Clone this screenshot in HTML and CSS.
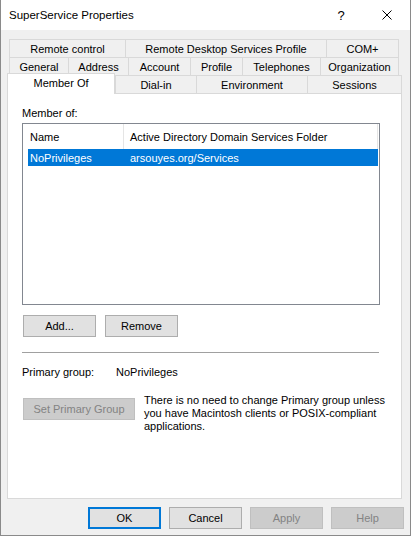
FILE: index.html
```html
<!DOCTYPE html>
<html lang="en">
<head>
    <meta charset="UTF-8">
    <title>SuperService Properties</title>
    <link rel="stylesheet" href="styles.css">
</head>
<body>
    <div class="window">
        <div class="titlebar">
            <span class="title">SuperService Properties</span>
            <span class="caption-btn help-btn">?</span>
            <span class="caption-btn close-btn">
                <svg width="10" height="10" viewBox="0 0 10 10"><path d="M0.5 0.5L9.5 9.5M9.5 0.5L0.5 9.5" stroke="#000" stroke-width="1" fill="none"/></svg>
            </span>
        </div>

        <div class="dialog">
            <div class="tabs">
                <div class="tab-row row-1">
                    <div class="tab">Remote control</div>
                    <div class="tab">Remote Desktop Services Profile</div>
                    <div class="tab last">COM+</div>
                </div>
                <div class="tab-row row-2">
                    <div class="tab">General</div>
                    <div class="tab">Address</div>
                    <div class="tab">Account</div>
                    <div class="tab">Profile</div>
                    <div class="tab">Telephones</div>
                    <div class="tab last">Organization</div>
                </div>
                <div class="tab-row row-3">
                    <div class="tab selected">Member Of</div>
                    <div class="tab">Dial-in</div>
                    <div class="tab">Environment</div>
                    <div class="tab last">Sessions</div>
                </div>
            </div>

            <div class="panel">
                <div class="label">Member of:</div>
                <div class="listview">
                    <div class="lv-header">
                        <div class="lv-col col-name">Name</div>
                        <div class="lv-col col-folder">Active Directory Domain Services Folder</div>
                    </div>
                    <div class="lv-row selected">
                        <div class="lv-cell cell-name">NoPrivileges</div>
                        <div class="lv-cell cell-folder">arsouyes.org/Services</div>
                    </div>
                </div>

                <div class="button-row">
                    <button class="btn">Add...</button>
                    <button class="btn">Remove</button>
                </div>

                <div class="separator"></div>

                <div class="primary-row">
                    <span class="primary-label">Primary group:</span>
                    <span>NoPrivileges</span>
                </div>

                <div class="set-row">
                    <button class="btn disabled wide">Set Primary Group</button>
                    <p class="note">There is no need to change Primary group unless<br>you have Macintosh clients or POSIX-compliant<br>applications.</p>
                </div>
            </div>

            <div class="footer">
                <button class="btn default">OK</button>
                <button class="btn">Cancel</button>
                <button class="btn disabled">Apply</button>
                <button class="btn disabled">Help</button>
            </div>
        </div>
    </div>
</body>
</html>
```

FILE: styles.css
```css
body {
    margin: 0;
    background: #fff;
    font-family: "Liberation Sans", Arial, sans-serif;
    font-size: 11px;
    color: #000;
}
.window {
    width: 411px;
    height: 536px;
    box-sizing: border-box;
    border: 1px solid #8a8a8a;
    border-top: none;
    display: flex;
    flex-direction: column;
    background: #f0f0f0;
}
.titlebar {
    height: 30px;
    background: #fff;
    display: flex;
    align-items: center;
}
.title {
    flex: 1;
    padding-left: 8px;
    font-size: 11.5px;
}
.caption-btn {
    width: 46px;
    height: 30px;
    display: flex;
    align-items: center;
    justify-content: center;
}
.help-btn {
    font-size: 13px;
}
.dialog {
    flex: 1;
    padding-top: 9px;
}
.tabs {
    margin-left: 6px;
    width: 395px;
}
.tab-row {
    display: grid;
    height: 18px;
    grid-template-rows: 18px;
}
.row-1 {
    margin-left: 2px;
    grid-template-columns: 116px 201px 73px;
}
.row-2 {
    margin-left: 2px;
    grid-template-columns: 59px 60px 62px 52px 78px 79px;
}
.row-3 {
    grid-template-columns: 108px 81px 111px 95px;
}
.tab {
    box-sizing: border-box;
    border-top: 1px solid #d9d9d9;
    border-left: 1px solid #d9d9d9;
    display: flex;
    align-items: center;
    justify-content: center;
    white-space: nowrap;
    padding-top: 1px;
}
.tab.last {
    border-right: 1px solid #d9d9d9;
}
.tab.selected {
    background: #fff;
    margin-top: -2px;
    height: 21px;
    border-right: 1px solid #d9d9d9;
    position: relative;
    z-index: 1;
    padding-top: 0;
    padding-bottom: 3px;
}
.panel {
    margin-left: 6px;
    width: 395px;
    height: 406px;
    box-sizing: border-box;
    border: 1px solid #d9d9d9;
    background: #fff;
    padding: 13px 22px 0 14px;
}
.label {
    line-height: 13px;
}
.listview {
    margin-top: 3px;
    width: 358px;
    height: 182px;
    box-sizing: border-box;
    border: 1px solid #828790;
}
.lv-header {
    display: flex;
    height: 25px;
}
.lv-col {
    box-sizing: border-box;
    display: flex;
    align-items: center;
    border-right: 1px solid #e5e5e5;
    white-space: nowrap;
}
.col-name {
    width: 101px;
    padding-left: 7px;
}
.col-folder {
    width: 254px;
    padding-left: 6px;
}
.lv-row {
    display: flex;
    height: 17px;
    margin-left: 5px;
    width: 350px;
    align-items: center;
}
.lv-row.selected {
    background: #0078d7;
    color: #fff;
}
.cell-name {
    width: 96px;
    padding-left: 2px;
    box-sizing: border-box;
}
.cell-folder {
    padding-left: 6px;
}
.button-row {
    display: flex;
    gap: 9px;
    margin-top: 10px;
    padding-left: 1px;
}
.btn {
    width: 73px;
    height: 22px;
    flex-shrink: 0;
    box-sizing: border-box;
    background: #e1e1e1;
    border: 1px solid #adadad;
    font-family: "Liberation Sans", Arial, sans-serif;
    font-size: 11px;
    color: #000;
    padding: 0;
}
.btn.disabled {
    background: #cccccc;
    border-color: #bfbfbf;
    color: #838383;
}
.btn.default {
    border: 2px solid #0078d7;
}
.btn.wide {
    width: 112px;
}
.separator {
    margin-top: 15px;
    width: 357px;
    border-top: 1px solid #a0a0a0;
}
.primary-row {
    margin-top: 13px;
    line-height: 13px;
    display: flex;
}
.primary-label {
    width: 94px;
}
.set-row {
    display: flex;
    margin-top: 15px;
    align-items: flex-start;
}
.set-row .btn {
    margin-top: 4px;
    margin-left: 1px;
}
.note {
    margin: 0 0 0 9px;
    line-height: 13px;
    white-space: nowrap;
}
.footer {
    display: flex;
    justify-content: flex-end;
    gap: 8px;
    padding-right: 6px;
    margin-top: 8px;
}
```
